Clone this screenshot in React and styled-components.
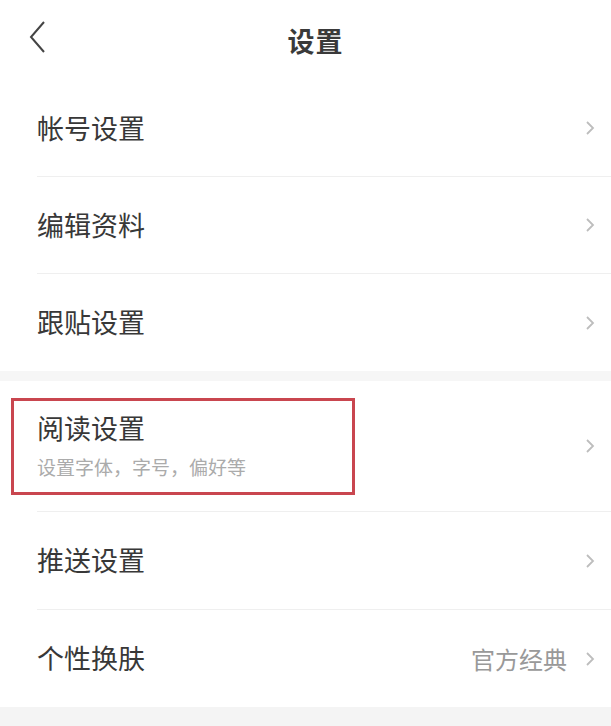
import styled, { createGlobalStyle } from "styled-components";

const GlobalStyle = createGlobalStyle`
  html, body {
    margin: 0;
    padding: 0;
    background: #ffffff;
  }
  body {
    font-family: "Noto Sans CJK SC", "Noto Sans", sans-serif;
    color: #333;
  }
`;

const Page = styled.div`
  width: 611px;
  height: 726px;
  overflow: hidden;
  background: #fff;
`;

const Header = styled.div`
  position: relative;
  height: 80px;
  display: flex;
  align-items: center;
  justify-content: center;
  padding-left: 20px;
  box-sizing: border-box;
`;

const BackButton = styled.div`
  position: absolute;
  left: 29px;
  top: 20px;
  width: 24px;
  height: 34px;
  display: flex;
  align-items: center;
`;

const Title = styled.h1`
  margin: 0;
  font-size: 27px;
  font-weight: 700;
  color: #3a3a3a;
  letter-spacing: 1px;
`;

const Group = styled.div`
  background: #fff;
`;

const Gap = styled.div`
  height: 10px;
  background: #f6f6f6;
`;

const Row = styled.div`
  height: ${(p) => p.h || 97}px;
  margin-left: 37px;
  display: flex;
  align-items: center;
  justify-content: space-between;
  border-bottom: ${(p) => (p.last ? "none" : "1px solid #efefef")};
  box-sizing: border-box;
`;

const Texts = styled.div`
  display: flex;
  flex-direction: column;
`;

const Label = styled.span`
  font-size: 27px;
  color: #383838;
  line-height: 1.2;
`;

const Sub = styled.span`
  font-size: 19px;
  color: #ababab;
  margin-top: 8px;
`;

const Highlight = styled.div`
  position: absolute;
  left: -26px;
  top: 17px;
  width: 338px;
  height: 91px;
  border: 3px solid #c9464f;
  pointer-events: none;
`;

const RowInner = styled.div`
  position: relative;
  flex: 1;
  height: 100%;
  display: flex;
  align-items: center;
`;

const Right = styled.div`
  display: flex;
  align-items: center;
  gap: 18px;
  padding-right: 16px;
`;

const Value = styled.span`
  font-size: 24px;
  color: #999;
`;

const Footer = styled.div`
  height: 20px;
  background: #f4f4f4;
`;

const Chevron = () => (
  <svg width="10" height="16" viewBox="0 0 10 16">
    <path d="M2 2 L8 8 L2 14" fill="none" stroke="#bdbdbd" strokeWidth="1.8" />
  </svg>
);

const Back = () => (
  <svg width="18" height="34" viewBox="0 0 18 34">
    <path d="M15 2 L2 17 L15 32" fill="none" stroke="#444" strokeWidth="2" />
  </svg>
);

const Item = ({ label, sub, value, h, last, mark }) => (
  <Row h={h} last={last}>
    <RowInner>
      {mark && <Highlight />}
      <Texts>
        <Label>{label}</Label>
        {sub && <Sub>{sub}</Sub>}
      </Texts>
    </RowInner>
    <Right>
      {value && <Value>{value}</Value>}
      <Chevron />
    </Right>
  </Row>
);

export default function App() {
  return (
    <Page>
      <GlobalStyle />
      <Header>
        <BackButton>
          <Back />
        </BackButton>
        <Title>设置</Title>
      </Header>
      <Group>
        <Item label="帐号设置" />
        <Item label="编辑资料" />
        <Item label="跟贴设置" last />
      </Group>
      <Gap />
      <Group>
        <Item label="阅读设置" sub="设置字体，字号，偏好等" h={131} mark />
        <Item label="推送设置" h={98} />
        <Item label="个性换肤" value="官方经典" last />
      </Group>
      <Footer />
    </Page>
  );
}
